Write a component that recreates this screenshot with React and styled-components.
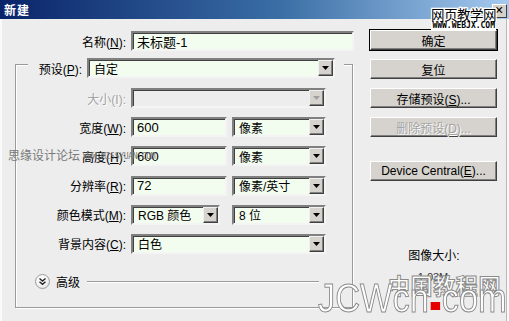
import React from 'react';
import styled, { createGlobalStyle } from 'styled-components';

const GlobalStyle = createGlobalStyle`
  html, body {
    margin: 0;
    padding: 0;
    background: #ededed;
  }
  body {
    font-family: "Liberation Sans", "Noto Sans CJK SC", sans-serif;
    font-size: 12px;
    color: #000;
  }
`;

const Dialog = styled.div`
  position: relative;
  width: 509px;
  height: 321px;
  overflow: hidden;
  background: #ededed;
  box-shadow: inset -2px 0 #fafafa, inset -3px 0 #b8b8b8, inset 2px 0 #fafafa;
`;

const TitleBar = styled.div`
  height: 19px;
  display: flex;
  align-items: center;
  padding: 0 2px 0 4px;
  background: linear-gradient(to right, #0a246a 0%, #3a6ea5 55%, #a6caf0 100%);
  color: #fff;
  font-weight: bold;
  font-size: 12px;
  letter-spacing: 1px;
`;

const TitleText = styled.span`
  flex: 1;
`;

const CloseBox = styled.div`
  width: 13px;
  height: 12px;
  margin-top: 2px;
  background: #d4d0c8;
  border: 1px solid;
  border-color: #fff #404040 #404040 #fff;
  display: flex;
  align-items: center;
  justify-content: center;
  color: #000;
  font-size: 11px;
  line-height: 1;
  font-family: "DejaVu Sans", sans-serif;
`;

const Body = styled.div`
  display: flex;
  padding-top: 12px;
`;

const LeftCol = styled.div`
  width: 356px;
  display: flex;
  flex-direction: column;
`;

const RightCol = styled.div`
  width: 128px;
  margin-left: 14px;
  margin-top: -1px;
  display: flex;
  flex-direction: column;
`;

const NameRow = styled.div`
  display: grid;
  grid-template-columns: 126px 223px;
  column-gap: 5px;
  align-items: center;
  height: 20px;
`;

const Label = styled.label`
  text-align: right;
  white-space: nowrap;
  color: ${p => (p.disabled ? '#a3a3a3' : '#000')};
  text-shadow: ${p => (p.disabled ? '1px 1px #fff' : 'none')};
  u {
    text-decoration: underline;
    text-underline-offset: 1px;
  }
`;

const sunken = `
  box-sizing: border-box;
  border: 2px solid;
  border-color: #808080 #f4f4f4 #f4f4f4 #808080;
  box-shadow: inset 1px 1px #404040;
`;

const TextBox = styled.div`
  ${sunken}
  height: 20px;
  width: ${p => p.$w || '100%'};
  background: #f3fdef;
  display: flex;
  align-items: center;
  padding-left: 4px;
  font-size: 13px;
  white-space: nowrap;
`;

const SelectBox = styled.div`
  ${sunken}
  height: 20px;
  width: ${p => p.$w || '100%'};
  background: ${p => (p.disabled ? '#ededed' : '#f3fdef')};
  display: flex;
  align-items: center;
  grid-column: ${p => (p.$span ? 'span 2' : 'auto')};
`;

const SelectValue = styled.span`
  flex: 1;
  padding-left: 5px;
  font-size: 12px;
  white-space: nowrap;
  overflow: hidden;
`;

const DropButton = styled.span`
  box-sizing: border-box;
  width: 15px;
  height: 16px;
  background: #d6d3ce;
  border: 1px solid;
  border-color: #f0f0f0 #404040 #404040 #f0f0f0;
  box-shadow: inset -1px -1px #808080;
  display: flex;
  align-items: center;
  justify-content: center;
`;

const Group = styled.div`
  box-sizing: border-box;
  margin-left: 15px;
  margin-top: 13px;
  width: 338px;
  height: 244px;
  border: 1px solid #9a9a9a;
  box-shadow: 1px 1px #fff, inset 1px 1px #fff;
  display: flex;
  flex-direction: column;
`;

const LegendRow = styled.div`
  margin-top: -7px;
  margin-left: 12px;
  width: 316px;
  box-sizing: border-box;
  padding-right: 9px;
  background: #ededed;
  display: grid;
  grid-template-columns: 54px 248px;
  column-gap: 5px;
  align-items: center;
`;

const Fields = styled.div`
  margin-top: 10px;
  display: grid;
  grid-template-columns: 110px 96px 94px;
  column-gap: 5px;
  row-gap: 9.2px;
  grid-auto-rows: 20px;
  align-items: center;
`;

const AdvancedRow = styled.div`
  margin-top: 19px;
  padding-left: 19px;
  padding-right: 33px;
  display: flex;
  align-items: center;
  gap: 6px;
`;

const Circle = styled.span`
  width: 15px;
  height: 15px;
  border-radius: 50%;
  border: 1px solid #9c9c9c;
  box-sizing: border-box;
  background: radial-gradient(circle at 40% 35%, #ffffff 0%, #f2f2f2 55%, #d6d6d6 100%);
  display: flex;
  align-items: center;
  justify-content: center;
`;

const Rule = styled.span`
  flex: 1;
  height: 1px;
  margin-left: 1px;
  background: #9a9a9a;
  box-shadow: 0 1px #fff;
`;

const Button = styled.button`
  box-sizing: border-box;
  height: 20px;
  width: 127px;
  margin-top: ${p => p.$mt || '0'};
  margin-bottom: 9px;
  padding: 0;
  font-family: "Liberation Sans", "Noto Sans CJK SC", sans-serif;
  font-size: 12px;
  background: #d6d3ce;
  border: 1px solid;
  border-color: #fff #404040 #404040 #fff;
  box-shadow: ${p => (p.$default ? '0 0 0 1px #000, inset -1px -1px #808080' : 'inset -1px -1px #808080')};
  color: ${p => (p.disabled ? '#a3a3a3' : '#000')};
  text-shadow: ${p => (p.disabled ? '1px 1px #fff' : 'none')};
  u {
    text-underline-offset: 1px;
  }
`;

const SizeInfo = styled.div`
  margin-top: 60px;
  text-align: center;
  line-height: 13px;
  font-size: 12px;
`;

const SizeValue = styled.div`
  margin-top: 8px;
  padding-right: 2px;
  text-align: center;
  line-height: 13px;
  font-size: 11px;
  color: #333;
`;

const MarkTop = styled.div`
  position: absolute;
  left: 431px;
  top: 6px;
  display: flex;
  flex-direction: column;
  align-items: flex-end;
`;

const MarkTopCn = styled.span`
  font-family: "Noto Sans CJK SC", sans-serif;
  font-size: 13.5px;
  line-height: 16px;
  letter-spacing: -0.5px;
  color: #000;
  -webkit-text-stroke: 2.5px #fff;
  paint-order: stroke fill;
`;

const MarkTopEn = styled.span`
  background: #fff;
  font-family: "DejaVu Sans Mono", monospace;
  font-weight: bold;
  font-size: 8px;
  line-height: 8px;
  padding: 0 1px;
`;

const MarkMid = styled.div`
  position: absolute;
  left: 8px;
  top: 146px;
  display: flex;
  align-items: center;
  gap: 3px;
  color: #7a7a7a;
`;

const MarkMidCn = styled.span`
  font-family: "Noto Sans CJK SC", sans-serif;
  font-size: 12px;
`;

const MarkMidEn = styled.span`
  font-family: "DejaVu Sans Mono", monospace;
  font-size: 8px;
  margin-top: 3px;
  letter-spacing: -0.3px;
`;

const MarkBottomCn = styled.div`
  position: absolute;
  left: 388px;
  top: 273px;
  font-family: "Noto Sans CJK SC", sans-serif;
  font-weight: bold;
  font-size: 22px;
  line-height: 23px;
  letter-spacing: 0.6px;
  color: #fff;
  -webkit-text-stroke: 1px #8a8a8a;
  white-space: nowrap;
`;

const MarkBottomEn = styled.div`
  position: absolute;
  left: 318px;
  top: 278px;
  font-family: "Liberation Sans", sans-serif;
  font-size: 40px;
  line-height: 40px;
  color: #fff;
  -webkit-text-stroke: 1px #8a8a8a;
  transform: scaleX(0.86);
  transform-origin: top left;
  white-space: nowrap;
`;

const RedDot = styled.span`
  display: inline-block;
  width: 11px;
  height: 8px;
  margin: 0 2px;
  vertical-align: 2px;
  background: #e60000;
`;

const Select = ({ value, disabled, w, span }) => (
  <SelectBox disabled={disabled} $w={w} $span={span}>
    <SelectValue>{value}</SelectValue>
    <DropButton>
      <svg width="7" height="4" viewBox="0 0 7 4">
        <path d="M0 0h7L3.5 4z" fill={disabled ? '#a0a0a0' : '#000'} />
      </svg>
    </DropButton>
  </SelectBox>
);

export default function App() {
  return (
    <>
      <GlobalStyle />
      <Dialog>
        <TitleBar>
          <TitleText>新建</TitleText>
          <CloseBox>✕</CloseBox>
        </TitleBar>
        <Body>
          <LeftCol>
            <NameRow>
              <Label>名称(<u>N</u>):</Label>
              <TextBox>未标题-1</TextBox>
            </NameRow>
            <Group>
              <LegendRow>
                <Label>预设(<u>P</u>):</Label>
                <Select value="自定" />
              </LegendRow>
              <Fields>
                <Label disabled>大小(I):</Label>
                <Select value="" disabled span />

                <Label>宽度(<u>W</u>):</Label>
                <TextBox>600</TextBox>
                <Select value="像素" />

                <Label>高度(<u>H</u>):</Label>
                <TextBox>600</TextBox>
                <Select value="像素" />

                <Label>分辨率(<u>R</u>):</Label>
                <TextBox>72</TextBox>
                <Select value="像素/英寸" />

                <Label>颜色模式(<u>M</u>):</Label>
                <Select value="RGB 颜色" w="89px" />
                <Select value="8 位" />

                <Label>背景内容(<u>C</u>):</Label>
                <Select value="白色" span />
              </Fields>
              <AdvancedRow>
                <Circle>
                  <svg width="9" height="9" viewBox="0 0 9 9">
                    <path d="M1.5 1.5l3 2.5 3-2.5M1.5 4.8l3 2.5 3-2.5" fill="none" stroke="#222" strokeWidth="1.4" />
                  </svg>
                </Circle>
                <span>高级</span>
                <Rule />
              </AdvancedRow>
            </Group>
          </LeftCol>
          <RightCol>
            <Button $default>确定</Button>
            <Button>复位</Button>
            <Button>存储预设(<u>S</u>)...</Button>
            <Button disabled>删除预设(<u>D</u>)...</Button>
            <Button $mt="15px">Device Central(<u>E</u>)...</Button>
            <SizeInfo>图像大小:</SizeInfo>
            <SizeValue>1.03M</SizeValue>
          </RightCol>
        </Body>

        <MarkTop>
          <MarkTopCn>网页教学网</MarkTopCn>
          <MarkTopEn>WWW.WEBJX.COM</MarkTopEn>
        </MarkTop>
        <MarkMid>
          <MarkMidCn>思缘设计论坛</MarkMidCn>
          <MarkMidEn>WWW.MISSYUAN.COM</MarkMidEn>
        </MarkMid>
        <MarkBottomCn>中国教程网</MarkBottomCn>
        <MarkBottomEn>
          JCWcn<RedDot />com
        </MarkBottomEn>
      </Dialog>
    </>
  );
}
